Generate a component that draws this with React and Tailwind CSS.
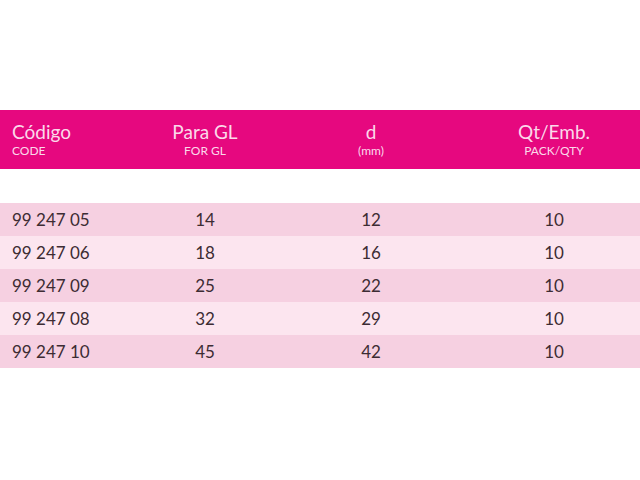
import React from "react";

const rows = [
  ["99 247 05", "14", "12", "10"],
  ["99 247 06", "18", "16", "10"],
  ["99 247 09", "25", "22", "10"],
  ["99 247 08", "32", "29", "10"],
  ["99 247 10", "45", "42", "10"],
];

const cols = "grid grid-cols-[140px_130px_202px_1fr]";

export default function App() {
  return (
    <div className="w-[640px] h-[480px] bg-white font-['Lato',sans-serif] pt-[110px]">
      <div className={`${cols} h-[59px] bg-[#e6087f] text-[#fbd9ea] pt-[10px]`}>
        <div className="pl-[12px]">
          <div className="text-[19px] leading-[24px]">Código</div>
          <div className="text-[12px] leading-[14px]">CODE</div>
        </div>
        <div className="text-center">
          <div className="text-[19px] leading-[24px]">Para GL</div>
          <div className="text-[12px] leading-[14px]">FOR GL</div>
        </div>
        <div className="text-center">
          <div className="text-[19px] leading-[24px]">d</div>
          <div className="text-[12px] leading-[14px]">(mm)</div>
        </div>
        <div className="text-center pr-[4px]">
          <div className="text-[19px] leading-[24px]">Qt/Emb.</div>
          <div className="text-[12px] leading-[14px]">PACK/QTY</div>
        </div>
      </div>
      <div className="h-[34px]" />
      <div>
        {rows.map((r, i) => (
          <div
            key={r[0]}
            className={`${cols} h-[33px] items-center text-[17px] text-[#3d2c33] ${
              i % 2 === 0 ? "bg-[#f6d0e1]" : "bg-[#fce5ef]"
            }`}
          >
            <div className="pl-[12px]">{r[0]}</div>
            <div className="text-center">{r[1]}</div>
            <div className="text-center">{r[2]}</div>
            <div className="text-center pr-[4px]">{r[3]}</div>
          </div>
        ))}
      </div>
    </div>
  );
}
